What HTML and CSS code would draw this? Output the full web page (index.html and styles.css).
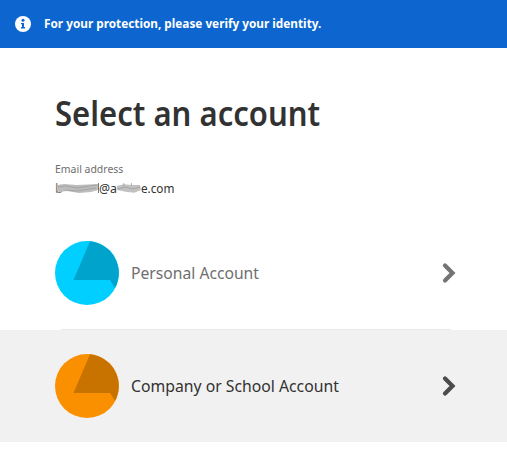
FILE: index.html
```
<!DOCTYPE html>
<html lang="en">
<head>
<meta charset="utf-8">
<title>Select an account</title>
<link rel="stylesheet" href="styles.css">
</head>
<body>
<header class="notice">
  <svg class="notice-icon" viewBox="0 0 16 16"><circle cx="8" cy="8" r="8" fill="#fff"/><circle cx="8" cy="4.2" r="1.5" fill="#0d66d0"/><path d="M6 7h3v4h1v1.5H6V11h1V8.3H6z" fill="#0d66d0"/></svg>
  <span class="notice-text">For your protection, please verify your identity.</span>
</header>
<main>
  <section class="intro">
    <h1><span class="title">Select an account</span></h1>
    <div class="label"><span class="label-text">Email address</span></div>
    <div class="email">
      <span class="first">b</span>
      <svg class="smudge" viewBox="0 0 42 12"><path d="M0 3 7 2 20 3 41 2V8L34 10 22 11 10 9 2 10 0 8Z" fill="#bdbdbd"/><path d="M1 5 9 4 20 6 40 3M8 8 20 9 39 6" fill="none" stroke="#a3a3a3"/><path d="M41.5 1v10" stroke="#777" fill="none"/></svg>
      <span class="middle">@a</span>
      <svg class="smudge short" viewBox="0 0 25 12"><path d="M0 4 7 2 15 3 24 3 25 8 18 11 9 10 0 8Z" fill="#c1c1c1"/><path d="M1 7 9 5 16 7 24 5M7 1v3M15 1v2" fill="none" stroke="#a3a3a3"/></svg>
      <span class="last">e.com</span>
    </div>
  </section>
  <div class="account personal">
    <svg class="avatar" viewBox="0 0 64 64"><circle cx="32" cy="32" r="32" fill="#00cfff"/><path d="M35 .2A32 32 0 0 1 60 47L55 39H18.5Z" fill="#00a3cc"/></svg>
    <span class="name">Personal Account</span>
    <svg class="chevron" viewBox="0 0 14 22"><path d="m3 3.5 7.5 7.5L3 18.5" /></svg>
  </div>
  <div class="divider"></div>
  <div class="account company">
    <svg class="avatar" viewBox="0 0 64 64"><circle cx="32" cy="32" r="32" fill="#fa9000"/><path d="M35 .2A32 32 0 0 1 60 47L55 39H18.5Z" fill="#c87300"/></svg>
    <span class="name">Company or School Account</span>
    <svg class="chevron" viewBox="0 0 14 22"><path d="m3 3.5 7.5 7.5L3 18.5" /></svg>
  </div>
</main>
</body>
</html>
```
FILE: styles.css
```
* { box-sizing: border-box; }
body { margin: 0; background: #fff; color: #323232; font-family: "Noto Sans", "Open Sans", sans-serif; white-space: nowrap; overflow: hidden; }
.notice { height: 48px; background: #0d66d0; color: #fff; display: flex; align-items: center; padding-left: 15px; gap: 13px; font-size: 13px; font-weight: 700; }
.notice-icon { width: 16px; height: 16px; }
.notice-text { padding-bottom: 2px; transform: scaleX(.906); transform-origin: left; }
.intro { height: 169px; padding: 42px 55px 0; }
h1 { margin: 0; font-size: 35px; line-height: 46px; font-weight: 600; }
.title { display: inline-block; transform: scaleX(.887); transform-origin: left; }
.label { margin-top: 25px; font-size: 11px; line-height: 16px; color: #6e6e6e; }
.label-text { display: inline-block; transform: scaleX(.95); transform-origin: left; }
.email { display: flex; align-items: center; height: 20px; margin-top: 1px; font-size: 13px; line-height: 20px; }
.first { width: 2px; color: #777; }
.smudge { width: 42px; height: 12px; flex: none; }
.middle { width: 18px; transform: scaleX(.95); transform-origin: left; }
.short { width: 24px; }
.last { transform: scaleX(.9); transform-origin: left; }
.account { height: 112px; display: flex; align-items: center; padding: 0 51px 0 55px; font-size: 17px; }
.avatar { width: 64px; height: 64px; flex: none; margin-right: 12px; }
.name { padding-bottom: 2px; transform: scaleX(.922); transform-origin: left; }
.chevron { width: 14px; height: 22px; margin-left: auto; fill: none; stroke: #747474; stroke-width: 4.2; stroke-linecap: round; }
.personal { color: #6e6e6e; }
.divider { height: 1px; margin: 0 56px 0 61px; background: #eaeaea; }
.company { background: #f1f1f1; }
.company .name { transform: scaleX(.927); }
.company .chevron { stroke: #4b4b4b; }
```
